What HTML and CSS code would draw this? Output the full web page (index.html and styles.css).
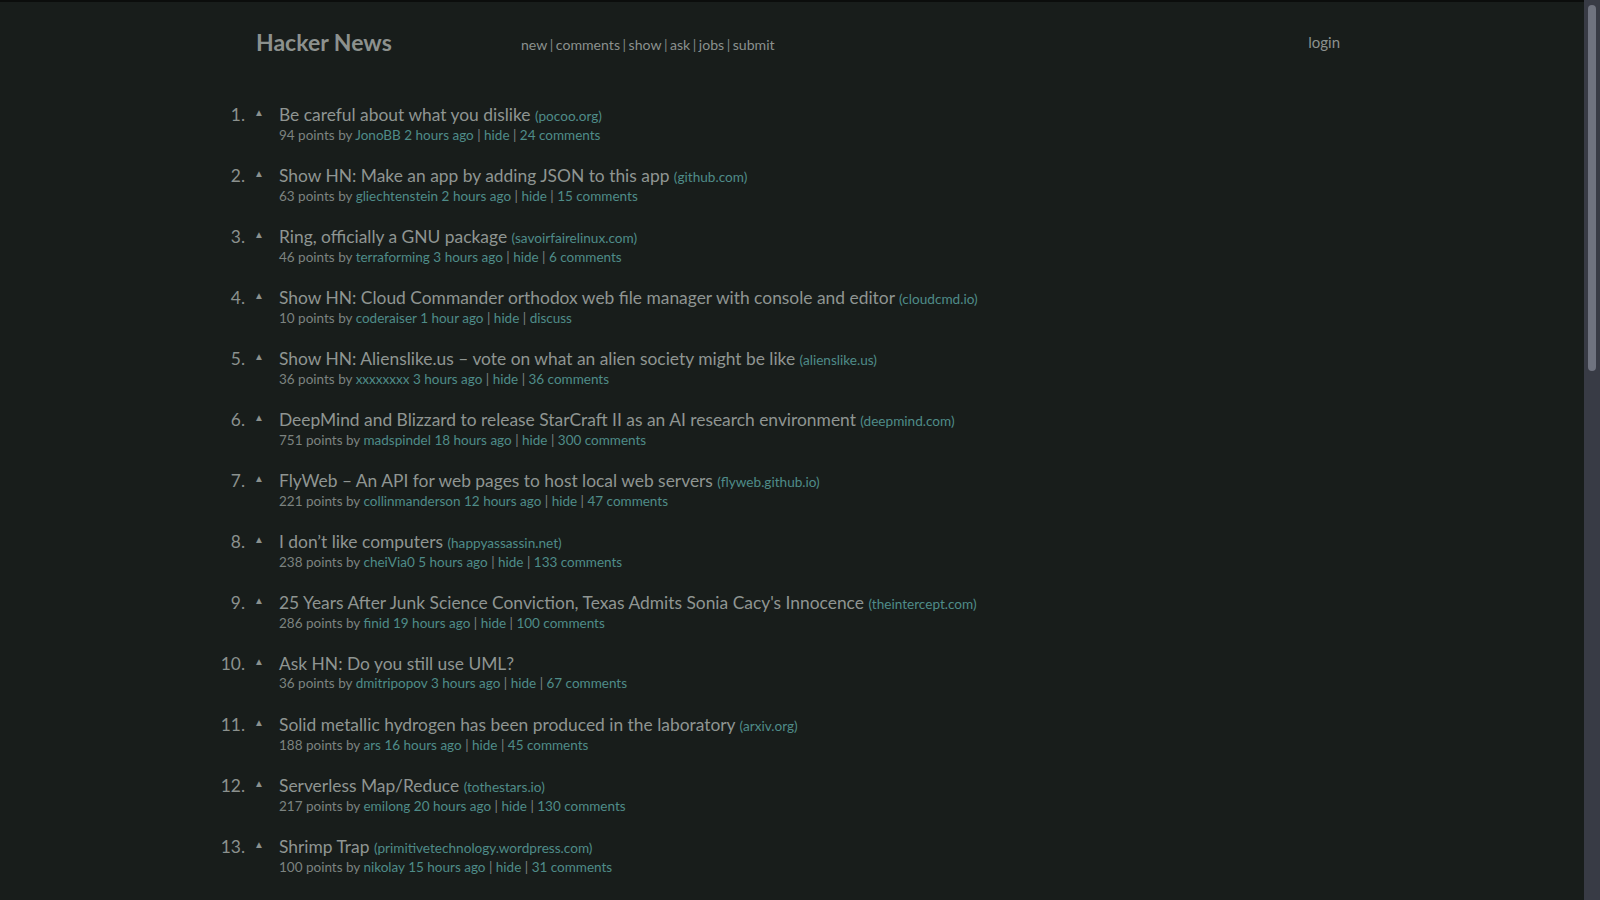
FILE: index.html
```html
<!DOCTYPE html>
<html>
<head>
<meta charset="utf-8">
<title>Hacker News</title>
<link rel="stylesheet" href="styles.css">
</head>
<body>
<div class="page">
  <header class="header">
    <a class="logo" href="#">Hacker News</a>
    <nav class="nav">
      <a href="#">new</a><span class="sep">|</span><a href="#">comments</a><span class="sep">|</span><a href="#">show</a><span class="sep">|</span><a href="#">ask</a><span class="sep">|</span><a href="#">jobs</a><span class="sep">|</span><a href="#">submit</a>
    </nav>
    <a class="login" href="#">login</a>
  </header>
  <ol class="items">
    <li class="item"><span class="rank">1.</span><span class="vote">&#9650;</span><div class="body"><div class="title"><a href="#">Be careful about what you dislike</a> <span class="domain">(pocoo.org)</span></div><div class="meta">94 points by <a href="#">JonoBB</a> <a href="#">2 hours ago</a> <span class="sep">|</span> <a href="#">hide</a> <span class="sep">|</span> <a href="#">24 comments</a></div></div></li>
    <li class="item"><span class="rank">2.</span><span class="vote">&#9650;</span><div class="body"><div class="title"><a href="#">Show HN: Make an app by adding JSON to this app</a> <span class="domain">(github.com)</span></div><div class="meta">63 points by <a href="#">gliechtenstein</a> <a href="#">2 hours ago</a> <span class="sep">|</span> <a href="#">hide</a> <span class="sep">|</span> <a href="#">15 comments</a></div></div></li>
    <li class="item"><span class="rank">3.</span><span class="vote">&#9650;</span><div class="body"><div class="title"><a href="#">Ring, officially a GNU package</a> <span class="domain">(savoirfairelinux.com)</span></div><div class="meta">46 points by <a href="#">terraforming</a> <a href="#">3 hours ago</a> <span class="sep">|</span> <a href="#">hide</a> <span class="sep">|</span> <a href="#">6 comments</a></div></div></li>
    <li class="item"><span class="rank">4.</span><span class="vote">&#9650;</span><div class="body"><div class="title"><a href="#">Show HN: Cloud Commander orthodox web file manager with console and editor</a> <span class="domain">(cloudcmd.io)</span></div><div class="meta">10 points by <a href="#">coderaiser</a> <a href="#">1 hour ago</a> <span class="sep">|</span> <a href="#">hide</a> <span class="sep">|</span> <a href="#">discuss</a></div></div></li>
    <li class="item"><span class="rank">5.</span><span class="vote">&#9650;</span><div class="body"><div class="title"><a href="#">Show HN: Alienslike.us – vote on what an alien society might be like</a> <span class="domain">(alienslike.us)</span></div><div class="meta">36 points by <a href="#">xxxxxxxx</a> <a href="#">3 hours ago</a> <span class="sep">|</span> <a href="#">hide</a> <span class="sep">|</span> <a href="#">36 comments</a></div></div></li>
    <li class="item"><span class="rank">6.</span><span class="vote">&#9650;</span><div class="body"><div class="title"><a href="#">DeepMind and Blizzard to release StarCraft II as an AI research environment</a> <span class="domain">(deepmind.com)</span></div><div class="meta">751 points by <a href="#">madspindel</a> <a href="#">18 hours ago</a> <span class="sep">|</span> <a href="#">hide</a> <span class="sep">|</span> <a href="#">300 comments</a></div></div></li>
    <li class="item"><span class="rank">7.</span><span class="vote">&#9650;</span><div class="body"><div class="title"><a href="#">FlyWeb – An API for web pages to host local web servers</a> <span class="domain">(flyweb.github.io)</span></div><div class="meta">221 points by <a href="#">collinmanderson</a> <a href="#">12 hours ago</a> <span class="sep">|</span> <a href="#">hide</a> <span class="sep">|</span> <a href="#">47 comments</a></div></div></li>
    <li class="item"><span class="rank">8.</span><span class="vote">&#9650;</span><div class="body"><div class="title"><a href="#">I don’t like computers</a> <span class="domain">(happyassassin.net)</span></div><div class="meta">238 points by <a href="#">cheiVia0</a> <a href="#">5 hours ago</a> <span class="sep">|</span> <a href="#">hide</a> <span class="sep">|</span> <a href="#">133 comments</a></div></div></li>
    <li class="item"><span class="rank">9.</span><span class="vote">&#9650;</span><div class="body"><div class="title"><a href="#">25 Years After Junk Science Conviction, Texas Admits Sonia Cacy's Innocence</a> <span class="domain">(theintercept.com)</span></div><div class="meta">286 points by <a href="#">finid</a> <a href="#">19 hours ago</a> <span class="sep">|</span> <a href="#">hide</a> <span class="sep">|</span> <a href="#">100 comments</a></div></div></li>
    <li class="item"><span class="rank">10.</span><span class="vote">&#9650;</span><div class="body"><div class="title"><a href="#">Ask HN: Do you still use UML?</a></div><div class="meta">36 points by <a href="#">dmitripopov</a> <a href="#">3 hours ago</a> <span class="sep">|</span> <a href="#">hide</a> <span class="sep">|</span> <a href="#">67 comments</a></div></div></li>
    <li class="item"><span class="rank">11.</span><span class="vote">&#9650;</span><div class="body"><div class="title"><a href="#">Solid metallic hydrogen has been produced in the laboratory</a> <span class="domain">(arxiv.org)</span></div><div class="meta">188 points by <a href="#">ars</a> <a href="#">16 hours ago</a> <span class="sep">|</span> <a href="#">hide</a> <span class="sep">|</span> <a href="#">45 comments</a></div></div></li>
    <li class="item"><span class="rank">12.</span><span class="vote">&#9650;</span><div class="body"><div class="title"><a href="#">Serverless Map/Reduce</a> <span class="domain">(tothestars.io)</span></div><div class="meta">217 points by <a href="#">emilong</a> <a href="#">20 hours ago</a> <span class="sep">|</span> <a href="#">hide</a> <span class="sep">|</span> <a href="#">130 comments</a></div></div></li>
    <li class="item"><span class="rank">13.</span><span class="vote">&#9650;</span><div class="body"><div class="title"><a href="#">Shrimp Trap</a> <span class="domain">(primitivetechnology.wordpress.com)</span></div><div class="meta">100 points by <a href="#">nikolay</a> <a href="#">15 hours ago</a> <span class="sep">|</span> <a href="#">hide</a> <span class="sep">|</span> <a href="#">31 comments</a></div></div></li>
  </ol>
</div>
<div class="scrollbar"><div class="scroll-thumb"></div></div>
</body>
</html>
```
FILE: styles.css
```css
html {
  background: #181d1b;
}
body {
  margin: 0;
  padding-right: 16px;
  border-top: 2px solid #0b0d0c;
  font-family: Lato, "Liberation Sans", sans-serif;
  color: #8b918e;
}
a {
  text-decoration: none;
  color: inherit;
}
.page {
  width: 1160px;
  margin: 0 auto;
}
.header {
  display: flex;
  align-items: flex-start;
  padding-top: 26px;
  padding-right: 32px;
  line-height: 28px;
}
.logo {
  width: 265px;
  margin-left: 44px;
  font-size: 23px;
  font-weight: 700;
  color: #8c918e;
}
.nav {
  flex: 1;
  margin-top: 3px;
  font-size: 14.1px;
  color: #8b918e;
}
.nav .sep {
  margin: 0 2.5px;
  color: #7f8582;
}
.login {
  font-size: 15px;
  color: #8b918e;
}
.items {
  list-style: none;
  margin: 44px 0 0;
  padding: 0;
}
.item {
  display: flex;
  align-items: flex-start;
  height: 61px;
}
.rank {
  width: 33px;
  text-align: right;
  font-size: 17.4px;
  line-height: 24px;
  color: #8b918e;
}
.vote {
  width: 10px;
  margin-left: 9px;
  margin-right: 15px;
  font-size: 10px;
  line-height: 18px;
  color: #8b918e;
}
.title {
  font-size: 17.4px;
  line-height: 24px;
  color: #8f9592;
}
.domain {
  font-size: 13.6px;
  color: #4f8c89;
}
.meta {
  margin-top: -2px;
  font-size: 13.5px;
  line-height: 18px;
  color: #7c8380;
}
.meta a {
  color: #4f8c89;
}
.meta .sep {
  color: #7c8380;
}
.scrollbar {
  position: fixed;
  top: 0;
  right: 0;
  bottom: 0;
  width: 16px;
  background: #383b45;
}
.scroll-thumb {
  margin: 5px 0 0 4px;
  width: 8px;
  height: 366px;
  border-radius: 4px;
  background: #6f737f;
}
```
